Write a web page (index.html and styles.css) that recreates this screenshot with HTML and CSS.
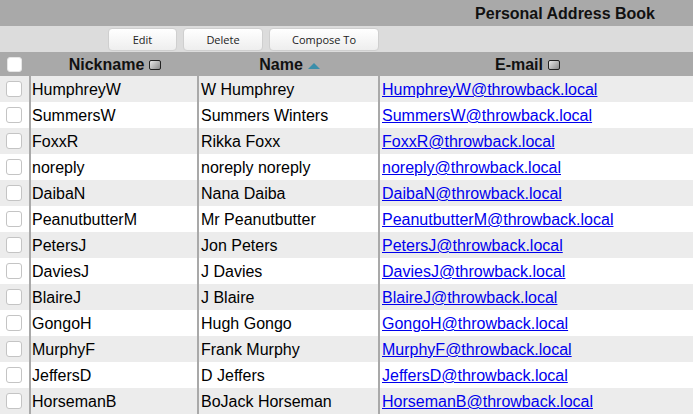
FILE: index.html
```html
<!DOCTYPE html>
<html>
<head>
<meta charset="utf-8">
<link rel="stylesheet" href="styles.css">
</head>
<body>
<div class="titlebar">Personal Address Book</div>
<div class="toolbar">
  <button class="btn btn-edit">Edit</button>
  <button class="btn btn-delete">Delete</button>
  <button class="btn btn-compose">Compose To</button>
</div>
<div class="list">
  <div class="row head">
    <div class="cell chk"><span class="box"></span></div>
    <div class="cell hc">Nickname <span class="sort-none"></span></div>
    <div class="cell hc">Name <span class="sort-up"></span></div>
    <div class="cell hc hc-mail">E-mail <span class="sort-none"></span></div>
  </div>
  <div class="row odd"><div class="cell chk"><span class="box"></span></div><div class="cell">HumphreyW</div><div class="cell">W Humphrey</div><div class="cell"><a href="#">HumphreyW@throwback.local</a></div></div>
  <div class="row"><div class="cell chk"><span class="box"></span></div><div class="cell">SummersW</div><div class="cell">Summers Winters</div><div class="cell"><a href="#">SummersW@throwback.local</a></div></div>
  <div class="row odd"><div class="cell chk"><span class="box"></span></div><div class="cell">FoxxR</div><div class="cell">Rikka Foxx</div><div class="cell"><a href="#">FoxxR@throwback.local</a></div></div>
  <div class="row"><div class="cell chk"><span class="box"></span></div><div class="cell">noreply</div><div class="cell">noreply noreply</div><div class="cell"><a href="#">noreply@throwback.local</a></div></div>
  <div class="row odd"><div class="cell chk"><span class="box"></span></div><div class="cell">DaibaN</div><div class="cell">Nana Daiba</div><div class="cell"><a href="#">DaibaN@throwback.local</a></div></div>
  <div class="row"><div class="cell chk"><span class="box"></span></div><div class="cell">PeanutbutterM</div><div class="cell">Mr Peanutbutter</div><div class="cell"><a href="#">PeanutbutterM@throwback.local</a></div></div>
  <div class="row odd"><div class="cell chk"><span class="box"></span></div><div class="cell">PetersJ</div><div class="cell">Jon Peters</div><div class="cell"><a href="#">PetersJ@throwback.local</a></div></div>
  <div class="row"><div class="cell chk"><span class="box"></span></div><div class="cell">DaviesJ</div><div class="cell">J Davies</div><div class="cell"><a href="#">DaviesJ@throwback.local</a></div></div>
  <div class="row odd"><div class="cell chk"><span class="box"></span></div><div class="cell">BlaireJ</div><div class="cell">J Blaire</div><div class="cell"><a href="#">BlaireJ@throwback.local</a></div></div>
  <div class="row"><div class="cell chk"><span class="box"></span></div><div class="cell">GongoH</div><div class="cell">Hugh Gongo</div><div class="cell"><a href="#">GongoH@throwback.local</a></div></div>
  <div class="row odd"><div class="cell chk"><span class="box"></span></div><div class="cell">MurphyF</div><div class="cell">Frank Murphy</div><div class="cell"><a href="#">MurphyF@throwback.local</a></div></div>
  <div class="row"><div class="cell chk"><span class="box"></span></div><div class="cell">JeffersD</div><div class="cell">D Jeffers</div><div class="cell"><a href="#">JeffersD@throwback.local</a></div></div>
  <div class="row odd"><div class="cell chk"><span class="box"></span></div><div class="cell">HorsemanB</div><div class="cell">BoJack Horseman</div><div class="cell"><a href="#">HorsemanB@throwback.local</a></div></div>
</div>
</body>
</html>
```
FILE: styles.css
```css
html, body {
  margin: 0;
  padding: 0;
  background: #ffffff;
  overflow: hidden;
}
body {
  font-family: "Liberation Sans", Arial, sans-serif;
  font-size: 16px;
  color: #000;
}
.titlebar {
  height: 26px;
  line-height: 28px;
  background: #a9a9a9;
  text-align: right;
  font-weight: bold;
  padding-right: 38px;
  color: #111;
}
.toolbar {
  height: 26px;
  box-sizing: border-box;
  background: #dcdcdc;
  display: flex;
  gap: 6px;
  padding: 2px 0 0 108px;
}
.btn {
  height: 23px;
  box-sizing: border-box;
  border: 1px solid #cfcfcf;
  border-radius: 4px;
  background: linear-gradient(#ffffff, #eeeeee);
  font-family: "Open Sans", "Noto Sans", sans-serif;
  font-size: 11px;
  color: #222;
  padding: 0;
  margin: 0;
}
.btn-edit { width: 69px; }
.btn-delete { width: 80px; }
.btn-compose { width: 110px; }
.row {
  display: grid;
  grid-template-columns: 31px 168px 181px 1fr;
  height: 26px;
  background: #ffffff;
}
.row.odd { background: #ececec; }
.row.head {
  height: 24px;
  background: #a9a9a9;
}
.cell {
  box-sizing: border-box;
  display: flex;
  align-items: center;
  padding-left: 2px;
  padding-top: 2px;
  white-space: nowrap;
  overflow: hidden;
  border-right: 2px solid #a9a9a9;
}
.cell:nth-child(2) { padding-left: 1px; }
.cell:last-child { border-right: none; padding-left: 2px; }
.head .cell { border-right: none; }
.cell.chk {
  justify-content: center;
  padding-left: 0;
  padding-top: 0;
}
.box {
  width: 16px;
  height: 16px;
  box-sizing: border-box;
  border: 1px solid #c4c4c4;
  border-radius: 3px;
  background: #fff;
  margin-right: 1px;
}
.head .box {
  border-color: #e6e6e6;
  width: 15px;
  height: 15px;
  margin-right: 2px;
  margin-top: 1px;
}
.row.head .hc {
  justify-content: center;
  font-weight: bold;
  color: #111;
  gap: 5px;
  padding-left: 0;
  padding-top: 2px;
}
.row.head .hc-mail { padding-right: 18px; }
.sort-none {
  width: 12px;
  height: 10px;
  box-sizing: border-box;
  border: 1px solid #222;
  border-radius: 2px;
  background: linear-gradient(135deg, #e8e8e8, #8a8a8a);
}
.sort-up {
  width: 0;
  height: 0;
  border-left: 6.5px solid transparent;
  border-right: 6.5px solid transparent;
  border-bottom: 6px solid #3a8eaa;
  margin-top: 1px;
}
a {
  color: #0000ee;
  text-decoration: underline;
}
```
